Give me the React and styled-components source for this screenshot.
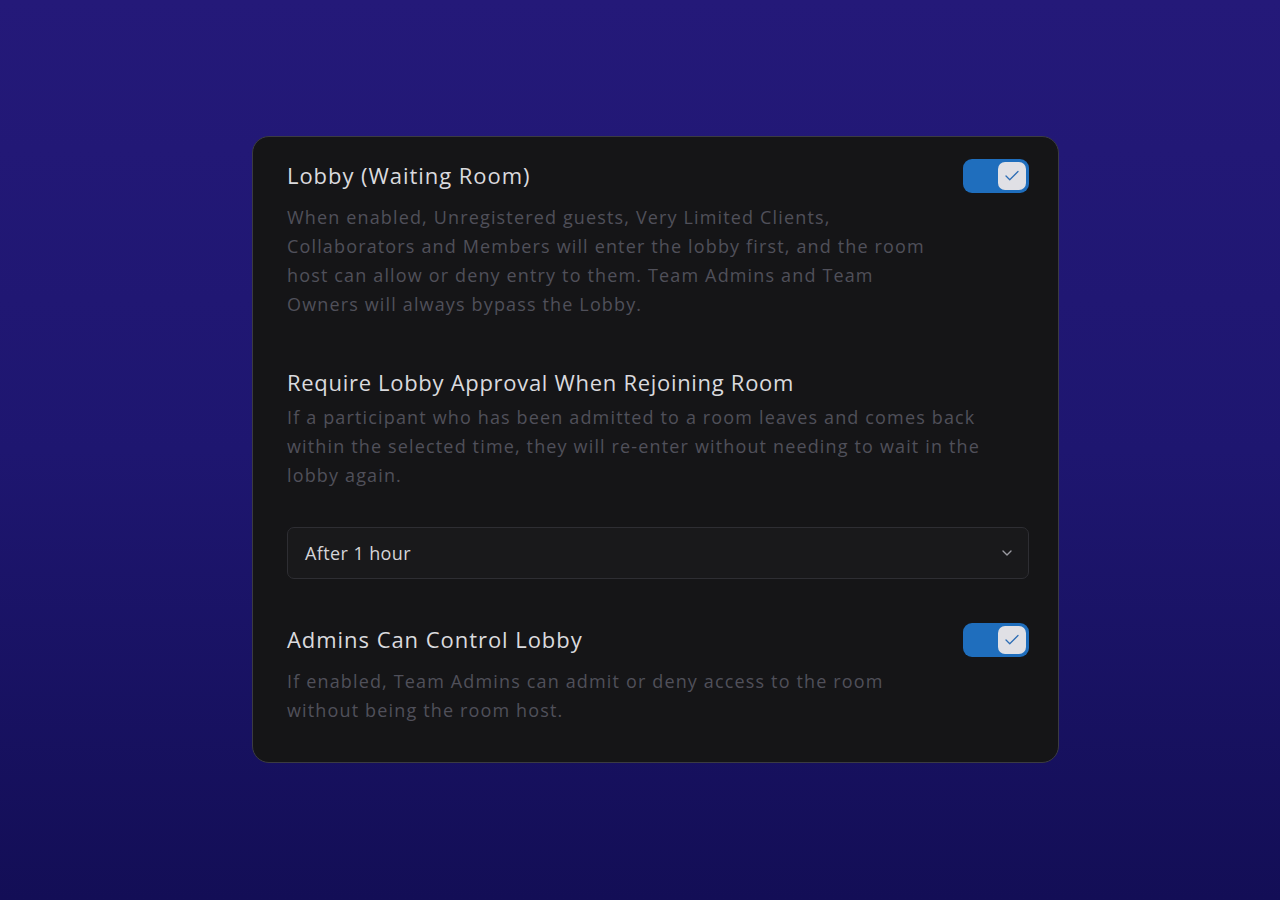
import React, { useState } from 'react';
import styled, { createGlobalStyle } from 'styled-components';
import { Check, ChevronDown } from 'lucide-react';

const GlobalStyle = createGlobalStyle`
	html, body {
		margin: 0;
		padding: 0;
	}
	body {
		min-height: 100vh;
		background: linear-gradient(180deg, #241979 0%, #1e1670 50%, #130e56 100%);
		font-family: 'Open Sans', 'Liberation Sans', sans-serif;
		-webkit-font-smoothing: antialiased;
	}
`;

const Toggle = ({ checked, onChange }) => (
	<Track $on={checked} onClick={() => onChange(!checked)} role='switch' aria-checked={checked}>
		<Knob $on={checked}>{checked && <Check size={18} strokeWidth={1.7} />}</Knob>
	</Track>
);

const LobbySettings = () => {
	const [lobby, setLobby] = useState(true);
	const [adminsControl, setAdminsControl] = useState(true);

	return (
		<Page>
			<GlobalStyle />
			<Card>
				<Header>
					<Title>Lobby (Waiting Room)</Title>
					<Toggle checked={lobby} onChange={setLobby} />
				</Header>
				<Description $narrow $top={10}>
					When enabled, Unregistered guests, Very Limited Clients, Collaborators and Members
					will enter the lobby first, and the room host can allow or deny entry to them. Team
					Admins and Team Owners will always bypass the Lobby.
				</Description>

				<Section $top={48}>
					<Title $tight>Require Lobby Approval When Rejoining Room</Title>
					<Description $top={6}>
						If a participant who has been admitted to a room leaves and comes back within the
						selected time, they will re-enter without needing to wait in the lobby again.
					</Description>
				</Section>

				<Select>
					<span>After 1 hour</span>
					<ChevronDown size={16} strokeWidth={2} />
				</Select>

				<Section $top={44}>
					<Header>
						<Title>Admins Can Control Lobby</Title>
						<Toggle checked={adminsControl} onChange={setAdminsControl} />
					</Header>
					<Description $narrow $top={10}>
						If enabled, Team Admins can admit or deny access to the room without being the
						room host.
					</Description>
				</Section>
			</Card>
		</Page>
	);
};

const Page = styled.main`
	min-height: 100vh;
	display: flex;
	align-items: flex-start;
	padding: 136px 0 0 252px;
	box-sizing: border-box;
`;

const Card = styled.section`
	width: 807px;
	height: 627px;
	box-sizing: border-box;
	padding: 22px 29px 0 34px;
	background: #151517;
	border: 1px solid #3b3b41;
	border-radius: 17px;
	display: flex;
	flex-direction: column;
`;

const Section = styled.div`
	margin-top: ${(p) => p.$top}px;
	display: flex;
	flex-direction: column;
`;

const Header = styled.div`
	display: flex;
	align-items: center;
	justify-content: space-between;
	height: 34px;

	h2 {
		padding-bottom: 3px;
	}
`;

const Title = styled.h2`
	margin: 0;
	font-size: 22px;
	line-height: 30px;
	font-weight: 500;
	color: #dadade;
	letter-spacing: ${(p) => (p.$tight ? '0.7px' : '0.95px')};
`;

const Description = styled.p`
	margin: ${(p) => p.$top}px 0 0;
	max-width: ${(p) => (p.$narrow ? '648px' : 'none')};
	font-size: 18px;
	line-height: 29px;
	letter-spacing: 1.15px;
	color: #50505a;
`;

const Select = styled.button`
	margin-top: 37px;
	height: 52px;
	width: 100%;
	box-sizing: border-box;
	display: flex;
	align-items: center;
	justify-content: space-between;
	padding: 0 13px 0 17px;
	background: #19191b;
	border: 1px solid #2e2e33;
	border-radius: 7px;
	font-family: inherit;
	font-size: 18px;
	font-weight: 500;
	letter-spacing: 0.4px;
	color: #d4d4d8;
	cursor: pointer;

	svg {
		color: #9b9ba2;
	}
`;

const Track = styled.button`
	width: 66px;
	height: 34px;
	padding: 3px;
	box-sizing: border-box;
	border: none;
	border-radius: 9px;
	background: ${(p) => (p.$on ? '#1f6ebd' : '#3a3a40')};
	display: flex;
	justify-content: ${(p) => (p.$on ? 'flex-end' : 'flex-start')};
	align-items: center;
	cursor: pointer;
`;

const Knob = styled.span`
	width: 28px;
	height: 28px;
	border-radius: 7px;
	background: #e0e0e5;
	display: flex;
	align-items: center;
	justify-content: center;
	color: #2d6db5;
`;

export default LobbySettings;
